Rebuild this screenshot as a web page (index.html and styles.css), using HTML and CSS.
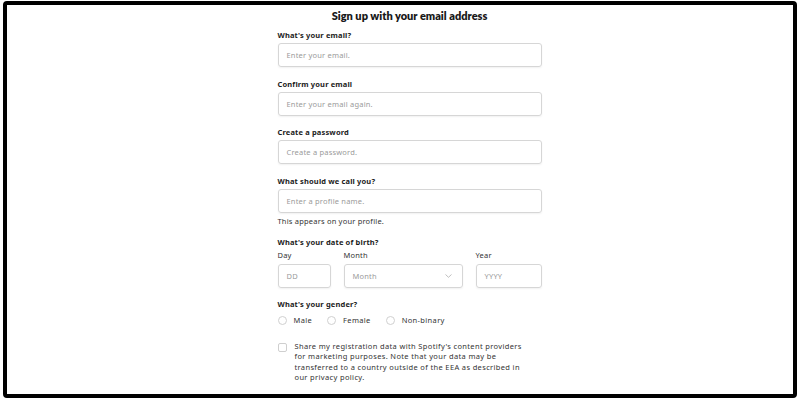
FILE: index.html
```html
<!DOCTYPE html>
<html lang="en">
<head>
<meta charset="utf-8">
<title>Sign up</title>
<link rel="stylesheet" href="styles.css">
</head>
<body>
<div class="frame">
  <form class="form">
    <h1 class="title">Sign up with your email address</h1>

    <div class="field">
      <label class="label">What's your email?</label>
      <div class="input">Enter your email.</div>
    </div>
    <div class="field">
      <label class="label">Confirm your email</label>
      <div class="input">Enter your email again.</div>
    </div>
    <div class="field">
      <label class="label">Create a password</label>
      <div class="input">Create a password.</div>
    </div>
    <div class="field last">
      <label class="label">What should we call you?</label>
      <div class="input">Enter a profile name.</div>
      <p class="help">This appears on your profile.</p>
    </div>

    <div class="dob">
      <div class="label">What's your date of birth?</div>
      <div class="dob-row">
        <div class="dob-col day">
          <span class="sub">Day</span>
          <div class="input">DD</div>
        </div>
        <div class="dob-col month">
          <span class="sub">Month</span>
          <div class="input select">Month
            <svg class="chev" width="7" height="4" viewBox="0 0 7 4"><path d="M0.5 0.5 L3.5 3.3 L6.5 0.5" fill="none" stroke="#b8b8b8" stroke-width="0.9"/></svg>
          </div>
        </div>
        <div class="dob-col year">
          <span class="sub">Year</span>
          <div class="input">YYYY</div>
        </div>
      </div>
    </div>

    <div class="gender">
      <div class="label">What's your gender?</div>
      <div class="radios">
        <span class="radio"><span class="circle"></span>Male</span>
        <span class="radio"><span class="circle"></span>Female</span>
        <span class="radio"><span class="circle"></span>Non-binary</span>
      </div>
    </div>

    <div class="share">
      <span class="box"></span>
      <p class="share-text">Share my registration data with Spotify's content providers for marketing purposes. Note that your data may be transferred to a country outside of the EEA as described in our privacy policy.</p>
    </div>
  </form>
</div>
</body>
</html>
```

FILE: styles.css
```css
* { box-sizing: border-box; }
html, body { margin: 0; padding: 0; background: #fff; }
body {
  width: 800px;
  height: 400px;
  overflow: hidden;
  font-family: "Noto Sans", "Lato", sans-serif;
  color: #222;
}
.frame {
  margin: 1px 0 0 3px;
  width: 794px;
  height: 397px;
  border: 4px solid #000;
  border-radius: 4px;
  display: flex;
  justify-content: center;
  padding: 4px 0 0 19px;
}
.form {
  width: 264px;
  display: flex;
  flex-direction: column;
}
.title {
  margin: 0 0 7px;
  font-family: "Lato", sans-serif;
  font-size: 11px;
  line-height: 14px;
  font-weight: 800;
  text-align: center;
  letter-spacing: 0;
  color: #191919;
}
.label {
  display: block;
  font-size: 7.5px;
  line-height: 10px;
  font-weight: 700;
  color: #1b1b1b;
  letter-spacing: 0.15px;
}
.field { margin-bottom: 11.6px; }
.field .label { margin-bottom: 3px; }
.field.last { margin-bottom: 0; }
.input {
  height: 24px;
  border: 1px solid #d6d6d6;
  border-radius: 3px;
  box-shadow: 0 1px 2px rgba(0,0,0,0.06);
  padding: 0 8px;
  display: flex;
  align-items: center;
  font-size: 7.5px;
  color: #9a9a9a;
  letter-spacing: 0.2px;
}
.help {
  margin: 3px 0 0;
  font-size: 7.5px;
  line-height: 10px;
  color: #333;
  letter-spacing: 0.2px;
}
.dob { margin-top: 11px; }
.dob-row {
  display: flex;
  gap: 13px;
  margin-top: 3px;
}
.dob-col { display: flex; flex-direction: column; }
.sub {
  font-size: 7.5px;
  line-height: 10px;
  color: #333;
  margin-bottom: 4px;
  letter-spacing: 0.2px;
}
.day { width: 53px; }
.month { width: 119px; }
.year { width: 66px; }
.select { justify-content: space-between; padding-right: 10px; }
.chev { display: block; }
.gender { margin-top: 11px; }
.radios {
  display: flex;
  align-items: center;
  margin-top: 6.5px;
  font-size: 7.5px;
  line-height: 10px;
  color: #333;
  letter-spacing: 0.35px;
}
.radio {
  display: flex;
  align-items: center;
  margin-right: 15px;
}
.circle {
  width: 9px;
  height: 9px;
  border: 1px solid #d0d0d0;
  border-radius: 50%;
  margin-right: 7px;
}
.share {
  display: flex;
  align-items: flex-start;
  margin-top: 16px;
}
.box {
  flex: none;
  width: 9px;
  height: 9px;
  border: 1px solid #cfcfcf;
  border-radius: 2px;
  margin-top: 1.5px;
  margin-right: 8px;
}
.share-text {
  margin: 0;
  width: 232px;
  font-size: 7.5px;
  line-height: 10.2px;
  color: #333;
  letter-spacing: 0.35px;
}
```
